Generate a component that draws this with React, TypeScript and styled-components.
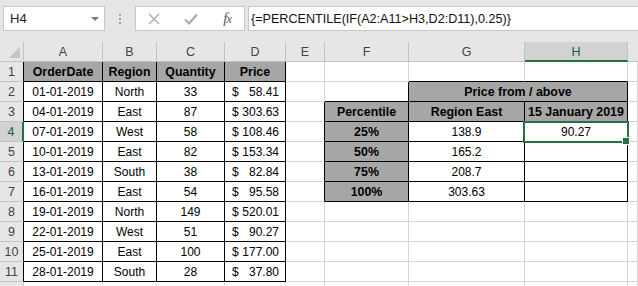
import React from "react";
import styled, { createGlobalStyle } from "styled-components";

const GlobalStyle = createGlobalStyle`
  html, body {
    margin: 0;
    padding: 0;
    background: #ffffff;
    overflow: hidden;
  }
  body {
    font-family: "Liberation Sans", Arial, sans-serif;
  }
`;

const GRID = "#d4d4d4";
const INK = "#000000";
const HEAD_BG = "#e6e6e6";
const HEAD_SEL = "#d2d2d2";
const HEAD_LINE = "#c2c2c2";
const GREEN = "#217346";
const FILL = "#a6a6a6";

const COL_WIDTHS = [79, 54, 68, 61, 39, 84, 116, 103];
const LETTERS = ["A", "B", "C", "D", "E", "F", "G", "H"];
const ROWS = 12;
const VISIBLE_ROWS = 11;
const SEL_ROW = 4;
const SEL_COL = 7;

type Box = { r1: number; r2: number; c1: number; c2: number };

const BOXES: Box[] = [
  { r1: 1, r2: 11, c1: 0, c2: 3 },
  { r1: 2, r2: 2, c1: 6, c2: 7 },
  { r1: 3, r2: 7, c1: 5, c2: 7 },
];

const boxed = (r: number, c: number) =>
  BOXES.some((b) => r >= b.r1 && r <= b.r2 && c >= b.c1 && c <= b.c2);

type CellData = {
  v?: string;
  price?: string;
  bold?: boolean;
  fill?: boolean;
  span?: number;
};

const head = (v: string, span?: number): CellData => ({ v, bold: true, fill: true, span });

const orders: [string, string, string, string][] = [
  ["01-01-2019", "North", "33", "58.41"],
  ["04-01-2019", "East", "87", "303.63"],
  ["07-01-2019", "West", "58", "108.46"],
  ["10-01-2019", "East", "82", "153.34"],
  ["13-01-2019", "South", "38", "82.84"],
  ["16-01-2019", "East", "54", "95.58"],
  ["19-01-2019", "North", "149", "520.01"],
  ["22-01-2019", "West", "51", "90.27"],
  ["25-01-2019", "East", "100", "177.00"],
  ["28-01-2019", "South", "28", "37.80"],
];

const CELLS: Record<string, CellData> = {
  A1: head("OrderDate"),
  B1: head("Region"),
  C1: head("Quantity"),
  D1: head("Price"),
  G2: head("Price from / above", 2),
  F3: head("Percentile"),
  G3: head("Region East"),
  H3: head("15 January 2019"),
  F4: head("25%"),
  F5: head("50%"),
  F6: head("75%"),
  F7: head("100%"),
  G4: { v: "138.9" },
  G5: { v: "165.2" },
  G6: { v: "208.7" },
  G7: { v: "303.63" },
  H4: { v: "90.27" },
};

orders.forEach(([d, reg, q, p], i) => {
  const r = i + 2;
  CELLS[`A${r}`] = { v: d };
  CELLS[`B${r}`] = { v: reg };
  CELLS[`C${r}`] = { v: q };
  CELLS[`D${r}`] = { price: p };
});

/* ---------- formula bar ---------- */

const Window = styled.div`
  width: 638px;
  height: 286px;
  overflow: hidden;
  background: #ffffff;
`;

const FormulaStrip = styled.div`
  height: 42px;
  box-sizing: border-box;
  padding: 6px 0 0 3px;
  display: flex;
  align-items: flex-start;
  background: ${HEAD_BG};
`;

const NameBox = styled.div`
  width: 102px;
  height: 25px;
  box-sizing: border-box;
  border: 1px solid #c6c6c6;
  background: #ffffff;
  display: flex;
  align-items: center;
  justify-content: space-between;
  padding: 0 5px 0 6px;
  font-size: 13px;
  color: #222;
`;

const Caret = styled.span`
  width: 0;
  height: 0;
  border-left: 4px solid transparent;
  border-right: 4px solid transparent;
  border-top: 4px solid #7a7a7a;
  margin-top: 1px;
`;

const Grip = styled.div`
  width: 30px;
  height: 25px;
  display: flex;
  flex-direction: column;
  align-items: center;
  justify-content: center;
  gap: 2px;

  > span {
    width: 2px;
    height: 2px;
    background: #a0a0a0;
  }
`;

const ButtonBox = styled.div`
  width: 110px;
  height: 25px;
  box-sizing: border-box;
  border: 1px solid #c6c6c6;
  background: #ffffff;
  display: flex;
  align-items: center;
`;

const ToolSlot = styled.div<{ $w: number }>`
  width: ${({ $w }) => $w}px;
  height: 100%;
  display: flex;
  align-items: center;
  justify-content: center;
`;

const Fx = styled.span`
  font-family: "Liberation Serif", "Times New Roman", serif;
  font-style: italic;
  color: #555555;
  font-size: 15px;
  letter-spacing: -1px;

  > small {
    font-size: 12px;
  }
`;

const FormulaInput = styled.div`
  flex: 1;
  height: 25px;
  margin-left: 3px;
  margin-right: -1px;
  box-sizing: border-box;
  border: 1px solid #c6c6c6;
  background: #ffffff;
  display: flex;
  align-items: center;
  padding-left: 2px;
  font-size: 12.6px;
  color: #111;
  white-space: nowrap;
`;

/* ---------- sheet ---------- */

const Sheet = styled.div`
  display: grid;
  grid-template-columns: 24px ${COL_WIDTHS.map((w) => `${w}px`).join(" ")} 1fr;
  grid-auto-rows: 20px;
`;

const Corner = styled.div`
  background: ${HEAD_BG};
  border-right: 1px solid ${HEAD_LINE};
  border-bottom: 1px solid ${HEAD_LINE};
  box-sizing: border-box;
  position: relative;

  &::after {
    content: "";
    position: absolute;
    right: 3px;
    bottom: 3px;
    width: 0;
    height: 0;
    border-left: 11px solid transparent;
    border-bottom: 11px solid #c4c4c4;
  }
`;

const ColHead = styled.div<{ $active?: boolean; $last?: boolean }>`
  box-sizing: border-box;
  background: ${({ $active }) => ($active ? HEAD_SEL : HEAD_BG)};
  border-right: ${({ $last }) => ($last ? "none" : `1px solid ${HEAD_LINE}`)};
  border-bottom: ${({ $active }) => ($active ? `2px solid ${GREEN}` : `1px solid ${HEAD_LINE}`)};
  display: flex;
  align-items: center;
  justify-content: center;
  font-size: 12.5px;
  color: ${({ $active }) => ($active ? "#1d5e39" : "#444444")};
  padding-top: 1px;
`;

const RowHead = styled.div<{ $active?: boolean; $edge: string }>`
  box-sizing: border-box;
  background: ${({ $active }) => ($active ? HEAD_SEL : HEAD_BG)};
  border-right: ${({ $active, $edge }) => ($active ? `2px solid ${GREEN}` : `1px solid ${$edge}`)};
  border-bottom: 1px solid ${HEAD_LINE};
  display: flex;
  align-items: center;
  justify-content: center;
  font-size: 12.5px;
  color: ${({ $active }) => ($active ? "#1d5e39" : "#444444")};
`;

const Cell = styled.div<{
  $right: string;
  $bottom: string;
  $fill?: boolean;
  $bold?: boolean;
  $span?: number;
}>`
  position: relative;
  box-sizing: border-box;
  grid-column: span ${({ $span }) => $span ?? 1};
  border-right: 1px solid ${({ $right }) => $right};
  border-bottom: 1px solid ${({ $bottom }) => $bottom};
  background: ${({ $fill }) => ($fill ? FILL : "#ffffff")};
  display: flex;
  align-items: center;
  justify-content: center;
  font-size: ${({ $bold }) => ($bold ? "12.4px" : "12px")};
  font-weight: ${({ $bold }) => ($bold ? 700 : 400)};
  color: ${INK};
  white-space: nowrap;
  overflow: visible;
  padding-top: 1px;
`;

const Accounting = styled.div`
  width: 100%;
  display: flex;
  justify-content: space-between;
  padding: 0 6px 0 7px;
  box-sizing: border-box;
`;

const Selection = styled.div`
  position: absolute;
  left: -2px;
  top: -1px;
  width: 106px;
  height: 22px;
  box-sizing: border-box;
  border: 2px solid ${GREEN};
  z-index: 2;
  pointer-events: none;
`;

const Handle = styled.div`
  position: absolute;
  left: 98px;
  top: 16px;
  width: 6px;
  height: 6px;
  background: ${GREEN};
  box-shadow: 0 0 0 1px #ffffff;
  z-index: 3;
`;

const CrossIcon = () => (
  <svg width="12" height="12" viewBox="0 0 12 12">
    <path d="M1 1 L11 11 M11 1 L1 11" stroke="#a8a8a8" strokeWidth="1.3" fill="none" />
  </svg>
);

const CheckIcon = () => (
  <svg width="14" height="12" viewBox="0 0 14 12">
    <path d="M1 6.5 L5 10.5 L13 1.5" stroke="#a8a8a8" strokeWidth="2" fill="none" />
  </svg>
);

function renderRow(r: number) {
  const items: React.ReactNode[] = [];
  const active = r === SEL_ROW;
  items.push(
    <RowHead key={`h${r}`} $active={active} $edge={boxed(r, 0) ? INK : HEAD_LINE}>
      {r <= VISIBLE_ROWS ? r : null}
    </RowHead>
  );

  let c = 0;
  while (c < 9) {
    const key = c < 8 ? `${LETTERS[c]}${r}` : `I${r}`;
    const data = CELLS[key] ?? {};
    const span = data.span ?? 1;
    const lastCol = c + span - 1;
    const right = boxed(r, lastCol) || boxed(r, lastCol + 1) ? INK : GRID;
    let bottom = GRID;
    for (let k = c; k <= lastCol; k++) {
      if (boxed(r, k) || boxed(r + 1, k)) bottom = INK;
    }
    const isSel = r === SEL_ROW && c === SEL_COL;
    items.push(
      <Cell
        key={key}
        $right={right}
        $bottom={bottom}
        $fill={data.fill}
        $bold={data.bold}
        $span={span > 1 ? span : undefined}
      >
        {data.price ? (
          <Accounting>
            <span>$</span>
            <span>{data.price}</span>
          </Accounting>
        ) : (
          data.v
        )}
        {isSel && (
          <>
            <Selection />
            <Handle />
          </>
        )}
      </Cell>
    );
    c += span;
  }
  return items;
}

export default function App() {
  const rows = Array.from({ length: ROWS }, (_, i) => i + 1);
  return (
    <Window>
      <GlobalStyle />
      <FormulaStrip>
        <NameBox>
          <span>H4</span>
          <Caret />
        </NameBox>
        <Grip>
          <span />
          <span />
          <span />
        </Grip>
        <ButtonBox>
          <ToolSlot $w={36}>
            <CrossIcon />
          </ToolSlot>
          <ToolSlot $w={38}>
            <CheckIcon />
          </ToolSlot>
          <ToolSlot $w={34}>
            <Fx>
              f<small>x</small>
            </Fx>
          </ToolSlot>
        </ButtonBox>
        <FormulaInput>{"{=PERCENTILE(IF(A2:A11>H3,D2:D11),0.25)}"}</FormulaInput>
      </FormulaStrip>
      <Sheet>
        <Corner />
        {LETTERS.map((l, i) => (
          <ColHead key={l} $active={i === SEL_COL}>
            {l}
          </ColHead>
        ))}
        <ColHead $last />
        {rows.map((r) => renderRow(r))}
      </Sheet>
    </Window>
  );
}
